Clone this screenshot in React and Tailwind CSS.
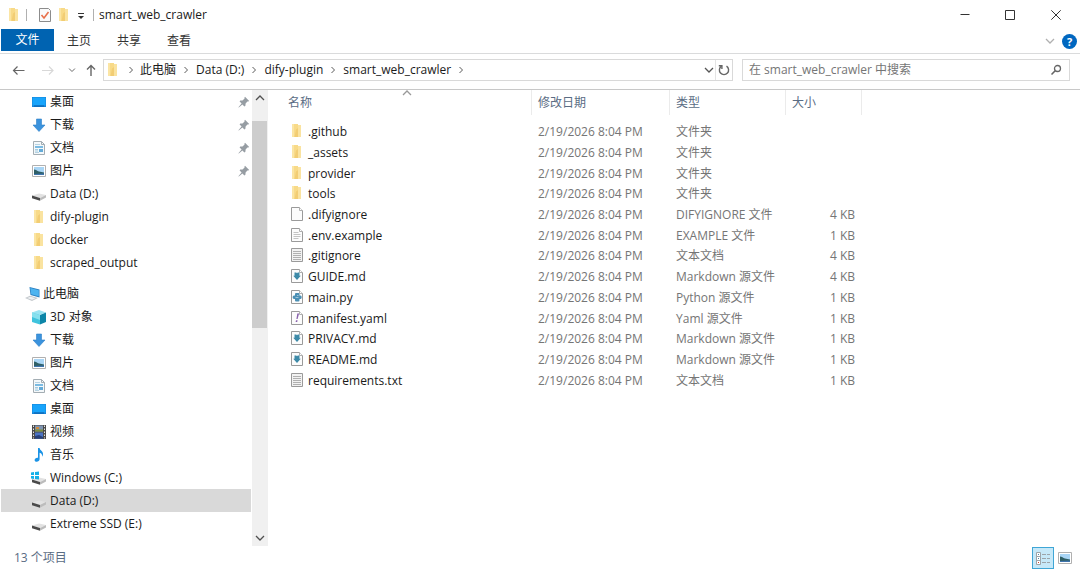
import { useState } from "react";

const quickAccess = [
  { id: "q-desktop", name: "桌面", icon: "desktop", pinned: true },
  { id: "q-downloads", name: "下载", icon: "download", pinned: true },
  { id: "q-documents", name: "文档", icon: "document", pinned: true },
  { id: "q-pictures", name: "图片", icon: "picture", pinned: true },
  { id: "q-data", name: "Data (D:)", icon: "drive" },
  { id: "q-dify", name: "dify-plugin", icon: "folder" },
  { id: "q-docker", name: "docker", icon: "folder" },
  { id: "q-scraped", name: "scraped_output", icon: "folder" },
];

const thisPc = [
  { id: "objects", name: "3D 对象", icon: "cube" },
  { id: "downloads", name: "下载", icon: "download" },
  { id: "pictures", name: "图片", icon: "picture" },
  { id: "documents", name: "文档", icon: "document" },
  { id: "desktop", name: "桌面", icon: "desktop" },
  { id: "videos", name: "视频", icon: "video" },
  { id: "music", name: "音乐", icon: "music" },
  { id: "c", name: "Windows (C:)", icon: "windowsDrive" },
  { id: "d", name: "Data (D:)", icon: "drive" },
  { id: "e", name: "Extreme SSD (E:)", icon: "drive" },
];

const modified = "2/19/2026 8:04 PM";

const files = [
  { name: ".github", type: "文件夹", size: "", icon: "folder" },
  { name: "_assets", type: "文件夹", size: "", icon: "folder" },
  { name: "provider", type: "文件夹", size: "", icon: "folder" },
  { name: "tools", type: "文件夹", size: "", icon: "folder" },
  { name: ".difyignore", type: "DIFYIGNORE 文件", size: "4 KB", icon: "blank" },
  { name: ".env.example", type: "EXAMPLE 文件", size: "1 KB", icon: "lines" },
  { name: ".gitignore", type: "文本文档", size: "4 KB", icon: "text" },
  { name: "GUIDE.md", type: "Markdown 源文件", size: "4 KB", icon: "markdown" },
  { name: "main.py", type: "Python 源文件", size: "1 KB", icon: "python" },
  { name: "manifest.yaml", type: "Yaml 源文件", size: "1 KB", icon: "yaml" },
  { name: "PRIVACY.md", type: "Markdown 源文件", size: "1 KB", icon: "markdown" },
  { name: "README.md", type: "Markdown 源文件", size: "1 KB", icon: "markdown" },
  { name: "requirements.txt", type: "文本文档", size: "1 KB", icon: "text" },
];

const crumbs = ["此电脑", "Data (D:)", "dify-plugin", "smart_web_crawler"];

const page = (
  <>
    <path d="M2.500 1.500h8l3 3v10h-11z" fill="#fcfcfc" stroke="#9a9a9a" />
    <path d="M10.500 1.500v3h3" fill="#fff" stroke="#b0b0b0" />
  </>
);

const drive = (
  <>
    <path d="M1 9.500 8 7.500l7 1.500-6 3z" fill="#e2e2e2" />
    <path d="M1 9.500 9 12v2.800L1 12.200z" fill="#4a4a4a" />
    <path d="m9 12 6-3v2.500l-6 3.300z" fill="#bcbcbc" />
  </>
);

const icons = {
  folder: (
    <>
      <path d="M3 1h6v13H3z" fill="#f8da88" />
      <path d="M3 1h2v13H3z" fill="#fbe5a4" />
      <path d="M9 2h3v12H9z" fill="#fae3a0" />
      <path d="M7 6.500 9 5v9H5.500z" fill="#f2cd74" />
    </>
  ),
  desktop: (
    <>
      <path d="M1 3h14v10H1z" fill="#1583d8" />
      <path d="M1.500 3.500h13v8h-13z" fill="#18a4fb" />
      <path d="M3 12h10" stroke="#0b5ea8" />
    </>
  ),
  download: <path d="M5.500 2h5v6H14l-6 6.500L2 8h3.500z" fill="#3b93dd" stroke="#2d7fc8" strokeWidth=".6" />,
  document: (
    <>
      <path d="M2.500 1.500h8l3 3v10h-11z" fill="#f4f8fa" stroke="#a3adb3" />
      <path d="M10.500 1.500v3h3" fill="none" stroke="#a3adb3" />
      <path d="M4 4.500h5M4 12.500h4" stroke="#b5d2e2" />
      <path d="M4 6h8v2H4z" fill="#7bbbe2" />
      <path d="M4 9.500h3M4 11h3" stroke="#a3cbe0" />
      <path d="M8 9h4v3H8z" fill="#64abd8" />
    </>
  ),
  picture: (
    <>
      <path d="M1.500 2.500h13v11h-13z" fill="#fff" stroke="#b0b0b0" />
      <path d="M3 4h10v8H3z" fill="#a9d5f5" />
      <path d="M3 10h10v2H3z" fill="#3f74ad" />
      <path d="M3 6.500c2 0 3 1.500 5 2l5 1v1L3 11z" fill="#2f5f66" />
    </>
  ),
  drive,
  windowsDrive: (
    <>
      {drive}
      <path d="M0 2.500 3 2v3H0zM4 2l4-.5V5H4zM0 6h3v3l-3-.4zM4 6h4v3.500L4 9z" fill="#16b1e8" />
    </>
  ),
  cube: (
    <>
      <path d="M1 3.500 8 1l7 2.500L8 6z" fill="#9be4f2" />
      <path d="M1 3.500 9 6v9.500L1 13z" fill="#3fc3dd" />
      <path d="m9 6 6-2.500V13l-6 2.500z" fill="#0d86a8" />
      <path d="m1 3.500 8 2.500v5L1 8z" fill="#86e0ee" />
    </>
  ),
  video: (
    <>
      <path d="M1 1h14v14H1z" fill="#4a4a4a" />
      <path d="M4 1.500h8v6H4z" fill="#7e94b2" />
      <path d="M4 8.500h8v6H4z" fill="#4c74c4" />
      <path d="M4 5.500h8v2H4z" fill="#7d8f3e" />
      <path d="M5 3h3v2H5z" fill="#d08a3c" />
      <path d="m4 12 4-1 4 2v1.500H4z" fill="#27407a" />
      <path d="M2.500 1.500v13M13.500 1.500v13" stroke="#e4e4e4" strokeDasharray="1.500 1.500" />
    </>
  ),
  music: (
    <path
      d="M7 1h1.600c.4 2.600 3.900 3.200 3.400 6.600-.1 1-.6 1.900-1 2.200.5-2.300-.7-3.700-2.400-4.100v6.600c0 1.600-1.500 2.500-2.900 2.500-1.300 0-2.100-.8-2.100-1.800 0-1.500 1.700-2.600 3.400-2.200z"
      fill="#1a93e6"
    />
  ),
  computer: (
    <>
      <path d="m4.500 1 10 2.500v8L5.500 9z" fill="#2a7fc0" />
      <path d="m5.300 2 8.500 2.200v6L6.200 8.300z" fill="#4db4f0" />
      <path d="M0 12 5 9.800l8 2.200-6 3z" fill="#c3c8cc" />
      <path d="m2 12 3.500-1.300 5 1.500-3.500 1.500z" fill="#eef1f3" />
    </>
  ),
  blank: page,
  lines: (
    <>
      {page}
      <path d="M4.500 5.500h5M4.500 7.500h7M4.500 9.500h7M4.500 11.500h5" stroke="#c4c4c4" />
    </>
  ),
  text: (
    <>
      <path d="M2.500 1.500h11v13h-11z" fill="#f2f2f2" stroke="#9a9a9a" />
      <path d="M4 4.500h8M4 6.500h8M4 8.500h8M4 10.500h8M4 12.500h8" stroke="#b0b0b0" />
    </>
  ),
  markdown: (
    <>
      {page}
      <path d="M5.500 4.500h1.700l.8.800.8-.8h1.700v3.300h1.300L8 12 4.200 7.800h1.300z" fill="#3d8aa8" />
    </>
  ),
  python: (
    <>
      {page}
      <path
        d="M7 4h2.500q1 0 1 1v1.500h1q1.200 0 1.200 1.800T11.500 10h-1v1.300q0 1.200-1 1.200H7q-1 0-1-1V10H5Q3.600 10 3.600 8.300T5 6.500h1V5q0-1 1-1z"
        fill="#4a8fb4"
      />
      <path d="M6.500 8.500h3M8 6.500h1.500" stroke="#b5d3e2" strokeWidth=".8" />
    </>
  ),
  yaml: (
    <>
      {page}
      <path d="M8.300 3.500h1.800L8.600 9H7.400zM7 10.200h1.600l-.4 1.800H6.600z" fill="#8a63ad" />
    </>
  ),
};

function Icon({ name }) {
  return (
    <svg viewBox="0 0 16 16" className="size-4 shrink-0" aria-hidden="true">
      {icons[name]}
    </svg>
  );
}

function Chevron({ className }) {
  return (
    <svg viewBox="0 0 10 10" className={`size-[10px] shrink-0 ${className}`} aria-hidden="true">
      <path d="M1 3l4 4 4-4" fill="none" stroke="currentColor" strokeWidth="1.3" />
    </svg>
  );
}

function Pin() {
  return (
    <svg viewBox="0 0 12 12" className="size-3 shrink-0" aria-hidden="true">
      <path d="M7 .8 11.200 5l-1 .6-.8-.2L7.600 7.500 7.400 9.800l-1 .6-2-2L.8 11.600l-.4-.4L3.600 7.600l-2-2 .6-1 2.300-.2L6.600 2.600l-.2-.8z" fill="#969da3" />
    </svg>
  );
}

function NavItem({ item, selected, onSelect }) {
  return (
    <li>
      <button
        type="button"
        onClick={() => onSelect(item.id)}
        className={`flex h-[23px] w-full items-center pr-px text-left ${
          item.icon === "computer" ? "gap-[2px] pl-6" : "gap-[3px] pl-[30px]"
        } ${selected ? "bg-[#d9d9d9]" : ""}`}
      >
        <Icon name={item.icon} />
        <span className="flex-1">{item.name}</span>
        {item.pinned ? <Pin /> : null}
      </button>
    </li>
  );
}

function TitleBar() {
  return (
    <header className="flex h-[29px] shrink-0 items-center">
      <div className="flex flex-1 items-center pl-[6px]">
        <Icon name="folder" />
        <span className="ml-1 h-3 w-px bg-[#b0b0b0]" />
        <button type="button" aria-label="属性" className="ml-[9px]">
          <svg viewBox="0 0 16 16" className="size-4">
            <path d="M3.500 1.500h9l2 2v11h-11z" fill="#fafafa" stroke="#8c8c8c" />
            <path d="m5.500 8 2.500 3 4.500-6" fill="none" stroke="#e8704a" strokeWidth="1.6" />
          </svg>
        </button>
        <button type="button" aria-label="新建文件夹" className="ml-1">
          <Icon name="folder" />
        </button>
        <button type="button" aria-label="自定义快速访问工具栏" className="ml-1">
          <svg viewBox="0 0 10 10" className="size-[10px]">
            <path d="M2 3.500h6" stroke="#333" />
            <path d="M2 6h6L5 9z" fill="#333" />
          </svg>
        </button>
        <span className="ml-[7px] h-3 w-px bg-[#b0b0b0]" />
        <h1 className="ml-[5px]">smart_web_crawler</h1>
      </div>
      <div className="flex h-full">
        <button type="button" aria-label="最小化" className="flex w-[45px] items-center justify-center">
          <svg viewBox="0 0 10 10" className="size-[10px]">
            <path d="M.5 4.500h9" stroke="#333" />
          </svg>
        </button>
        <button type="button" aria-label="最大化" className="flex w-[45px] items-center justify-center">
          <svg viewBox="0 0 10 10" className="size-[10px]">
            <path d="M.5.5h9v9h-9z" fill="none" stroke="#333" />
          </svg>
        </button>
        <button type="button" aria-label="关闭" className="flex w-12 items-center justify-center">
          <svg viewBox="0 0 10 10" className="size-[10px]">
            <path d="m.3.3 9.400 9.400M9.700.3.300 9.700" stroke="#333" />
          </svg>
        </button>
      </div>
    </header>
  );
}

function Ribbon() {
  return (
    <nav className="flex h-[25px] shrink-0 items-start border-b border-[#dadbdc] pl-px text-[#333]">
      <button type="button" className="h-[22px] w-[53px] bg-[#0063b1] text-white">
        文件
      </button>
      <button type="button" className="h-6 w-[50px]">主页</button>
      <button type="button" className="h-6 w-[50px]">共享</button>
      <button type="button" className="h-6 w-[50px]">查看</button>
      <div className="ml-auto flex h-6 items-center gap-[7px] pr-[3px]">
        <button type="button" aria-label="展开功能区">
          <Chevron className="text-[#b0b0b0]" />
        </button>
        <button type="button" aria-label="帮助" className="size-[15px] rounded-full bg-[#0067c0] text-[11px] leading-[15px] font-bold text-white">
          ?
        </button>
      </div>
    </nav>
  );
}

function AddressBar({ query, onQuery }) {
  return (
    <div className="flex h-9 shrink-0 items-center border-b border-[#c8c8c8] pr-[10px] pb-[3px]">
      <div className="flex shrink-0 items-center pl-3 text-[#666]">
        <button type="button" aria-label="后退">
          <svg viewBox="0 0 14 14" className="size-[14px]">
            <path d="M12.500 7.500h-11M5.500 3.500l-4 4 4 4" fill="none" stroke="currentColor" strokeWidth="1.2" />
          </svg>
        </button>
        <button type="button" aria-label="前进" disabled className="ml-[15px] text-[#d8d8d8]">
          <svg viewBox="0 0 14 14" className="size-[14px]">
            <path d="M1 7.500h11M8 3.500l4 4-4 4" fill="none" stroke="currentColor" strokeWidth="1.2" />
          </svg>
        </button>
        <button type="button" aria-label="最近浏览的位置" className="ml-3">
          <Chevron className="scale-75" />
        </button>
        <button type="button" aria-label="上移" className="ml-[7px]">
          <svg viewBox="0 0 14 14" className="size-[14px]">
            <path d="M7 13V2.500M3 6.500l4-4 4 4" fill="none" stroke="currentColor" strokeWidth="1.4" />
          </svg>
        </button>
      </div>
      <div className="ml-[5px] flex h-[22px] flex-1 items-center border border-[#d9d9d9] pl-px">
        <Icon name="folder" />
        <ol className="flex items-center">
          <li className="flex w-[19px] justify-center">
            <Chevron className="-rotate-90 scale-75 text-[#555]" />
          </li>
          {crumbs.map((crumb) => (
            <li key={crumb} className="flex items-center">
              <button type="button">{crumb}</button>
              <span className="flex w-5 justify-center">
                <Chevron className="-rotate-90 scale-75 text-[#555]" />
              </span>
            </li>
          ))}
        </ol>
        <button type="button" aria-label="以前的位置" className="mr-px ml-auto text-[#555]">
          <Chevron className="" />
        </button>
        <button type="button" aria-label="刷新" className="flex h-full w-[17px] items-center justify-center border-l border-[#e4e4e4] text-[#666]">
          <svg viewBox="0 0 12 12" className="size-3">
            <path d="M3.500 2.200A4.600 4.600 0 1 0 8.500 2.200" fill="none" stroke="currentColor" strokeWidth="1.4" />
            <path d="M3.900 5V1.700H.8" fill="none" stroke="currentColor" strokeWidth="1.4" />
          </svg>
        </button>
      </div>
      <label className="ml-[9px] flex h-[22px] w-[328px] items-center border border-[#d9d9d9] pr-[7px] pl-[6px]">
        <input
          type="search"
          aria-label="搜索"
          value={query}
          onChange={(event) => onQuery(event.target.value)}
          placeholder="在 smart_web_crawler 中搜索"
          className="min-w-0 flex-1 outline-none placeholder:text-[#757575]"
        />
        <svg viewBox="0 0 12 12" className="size-3" aria-hidden="true">
          <circle cx="7.500" cy="4.500" r="3" fill="none" stroke="#666" strokeWidth="1.3" />
          <path d="M5.200 6.800 1.500 10.500" stroke="#666" strokeWidth="1.6" />
        </svg>
      </label>
    </div>
  );
}

function Sidebar({ selected, onSelect }) {
  return (
    <aside className="flex w-[268px] shrink-0">
      <div className="flex-1 overflow-hidden pr-px pl-px">
        <ul>
          {quickAccess.map((item) => (
            <NavItem key={item.id} item={item} selected={selected === item.id} onSelect={onSelect} />
          ))}
        </ul>
        <ul className="mt-2">
          <NavItem
            item={{ id: "pc", name: "此电脑", icon: "computer" }}
            selected={selected === "pc"}
            onSelect={onSelect}
          />
          {thisPc.map((item) => (
            <NavItem key={item.id} item={item} selected={selected === item.id} onSelect={onSelect} />
          ))}
        </ul>
      </div>
      <div className="flex w-4 flex-col bg-[#f0f0f0] text-[#505050]">
        <button type="button" aria-label="向上滚动" className="flex h-[31px] justify-center pt-[3px]">
          <Chevron className="rotate-180" />
        </button>
        <div className="h-[207px] w-[15px] bg-[#cdcdcd]" />
        <button type="button" aria-label="向下滚动" className="mt-auto flex h-[17px] items-center justify-center">
          <Chevron className="" />
        </button>
      </div>
    </aside>
  );
}

function FileTable({ rows }) {
  return (
    <main className="flex-1 overflow-hidden">
      <table className="w-[594px] table-fixed border-collapse text-left text-[#757575]">
        <thead>
          <tr className="h-8 align-top text-[#5a6c84]">
            <th className="relative w-[264px] p-0 font-normal">
              <Chevron className="absolute top-[-2px] left-[134px] rotate-180 text-[#999]" />
              <div className="h-[25px] border-r border-[#ebebeb] pl-5 leading-[25px]">名称</div>
            </th>
            <th className="w-[138px] p-0 font-normal">
              <div className="h-[25px] border-r border-[#ebebeb] pl-[6px] leading-[25px]">修改日期</div>
            </th>
            <th className="w-[116px] p-0 font-normal">
              <div className="h-[25px] border-r border-[#ebebeb] pl-[6px] leading-[25px]">类型</div>
            </th>
            <th className="p-0 font-normal">
              <div className="h-[25px] border-r border-[#ebebeb] pl-[6px] leading-[25px]">大小</div>
            </th>
          </tr>
        </thead>
        <tbody className="h-[269px]">
          {rows.map((file) => (
            <tr key={file.name}>
              <td className="p-0 pl-[21px]">
                <div className="flex items-start gap-[3px] text-[#1a1a1a]">
                  <span className="-mt-px">
                    <Icon name={file.icon} />
                  </span>
                  {file.name}
                </div>
              </td>
              <td className="p-0 pl-[6px]">{modified}</td>
              <td className="p-0 pl-[6px]">{file.type}</td>
              <td className="p-0 pr-[7px] text-right">{file.size}</td>
            </tr>
          ))}
        </tbody>
      </table>
    </main>
  );
}

function App() {
  const [selected, setSelected] = useState("d");
  const [query, setQuery] = useState("");
  const [view, setView] = useState("details");

  const rows = files.filter((file) => file.name.toLowerCase().includes(query.toLowerCase()));

  return (
    <div className="flex min-h-screen flex-col bg-white font-['Open_Sans','Noto_Sans_CJK_SC',sans-serif] text-[12px] leading-4 text-[#1a1a1a]">
      <TitleBar />
      <Ribbon />
      <AddressBar query={query} onQuery={setQuery} />
      <div className="flex flex-1">
        <Sidebar selected={selected} onSelect={setSelected} />
        <FileTable rows={rows} />
      </div>
      <footer className="flex h-[23px] shrink-0 items-center pr-1 pl-[14px] text-[#5a6c84]">
        <span>{files.length} 个项目</span>
        <button
          type="button"
          aria-label="详细信息"
          onClick={() => setView("details")}
          className={`ml-auto flex size-[22px] items-center justify-center border ${
            view === "details" ? "border-[#3fa6d6] bg-[#c6e8f8]" : "border-transparent"
          }`}
        >
          <svg viewBox="0 0 16 16" className="size-4">
            <path d="M1.500 2.500h4v4h-4zM1.500 6.500h4v4h-4zM1.500 10.500h4v4h-4z" fill="#fff" stroke="#9ca4a9" />
            <path d="M3 4h1v1H3zM3 8h1v1H3z" fill="#4d88a8" />
            <path d="M3 12h1v1H3z" fill="#d0452c" />
            <path d="M7 4.500h4M12 4.500h3M7 8.500h4M12 8.500h3M7 12.500h4M12 12.500h3" stroke="#9ca4a9" />
          </svg>
        </button>
        <button
          type="button"
          aria-label="大图标"
          onClick={() => setView("large")}
          className={`flex size-[22px] items-center justify-center border ${
            view === "large" ? "border-[#3fa6d6] bg-[#c6e8f8]" : "border-transparent"
          }`}
        >
          <Icon name="picture" />
        </button>
      </footer>
    </div>
  );
}

export default App;
